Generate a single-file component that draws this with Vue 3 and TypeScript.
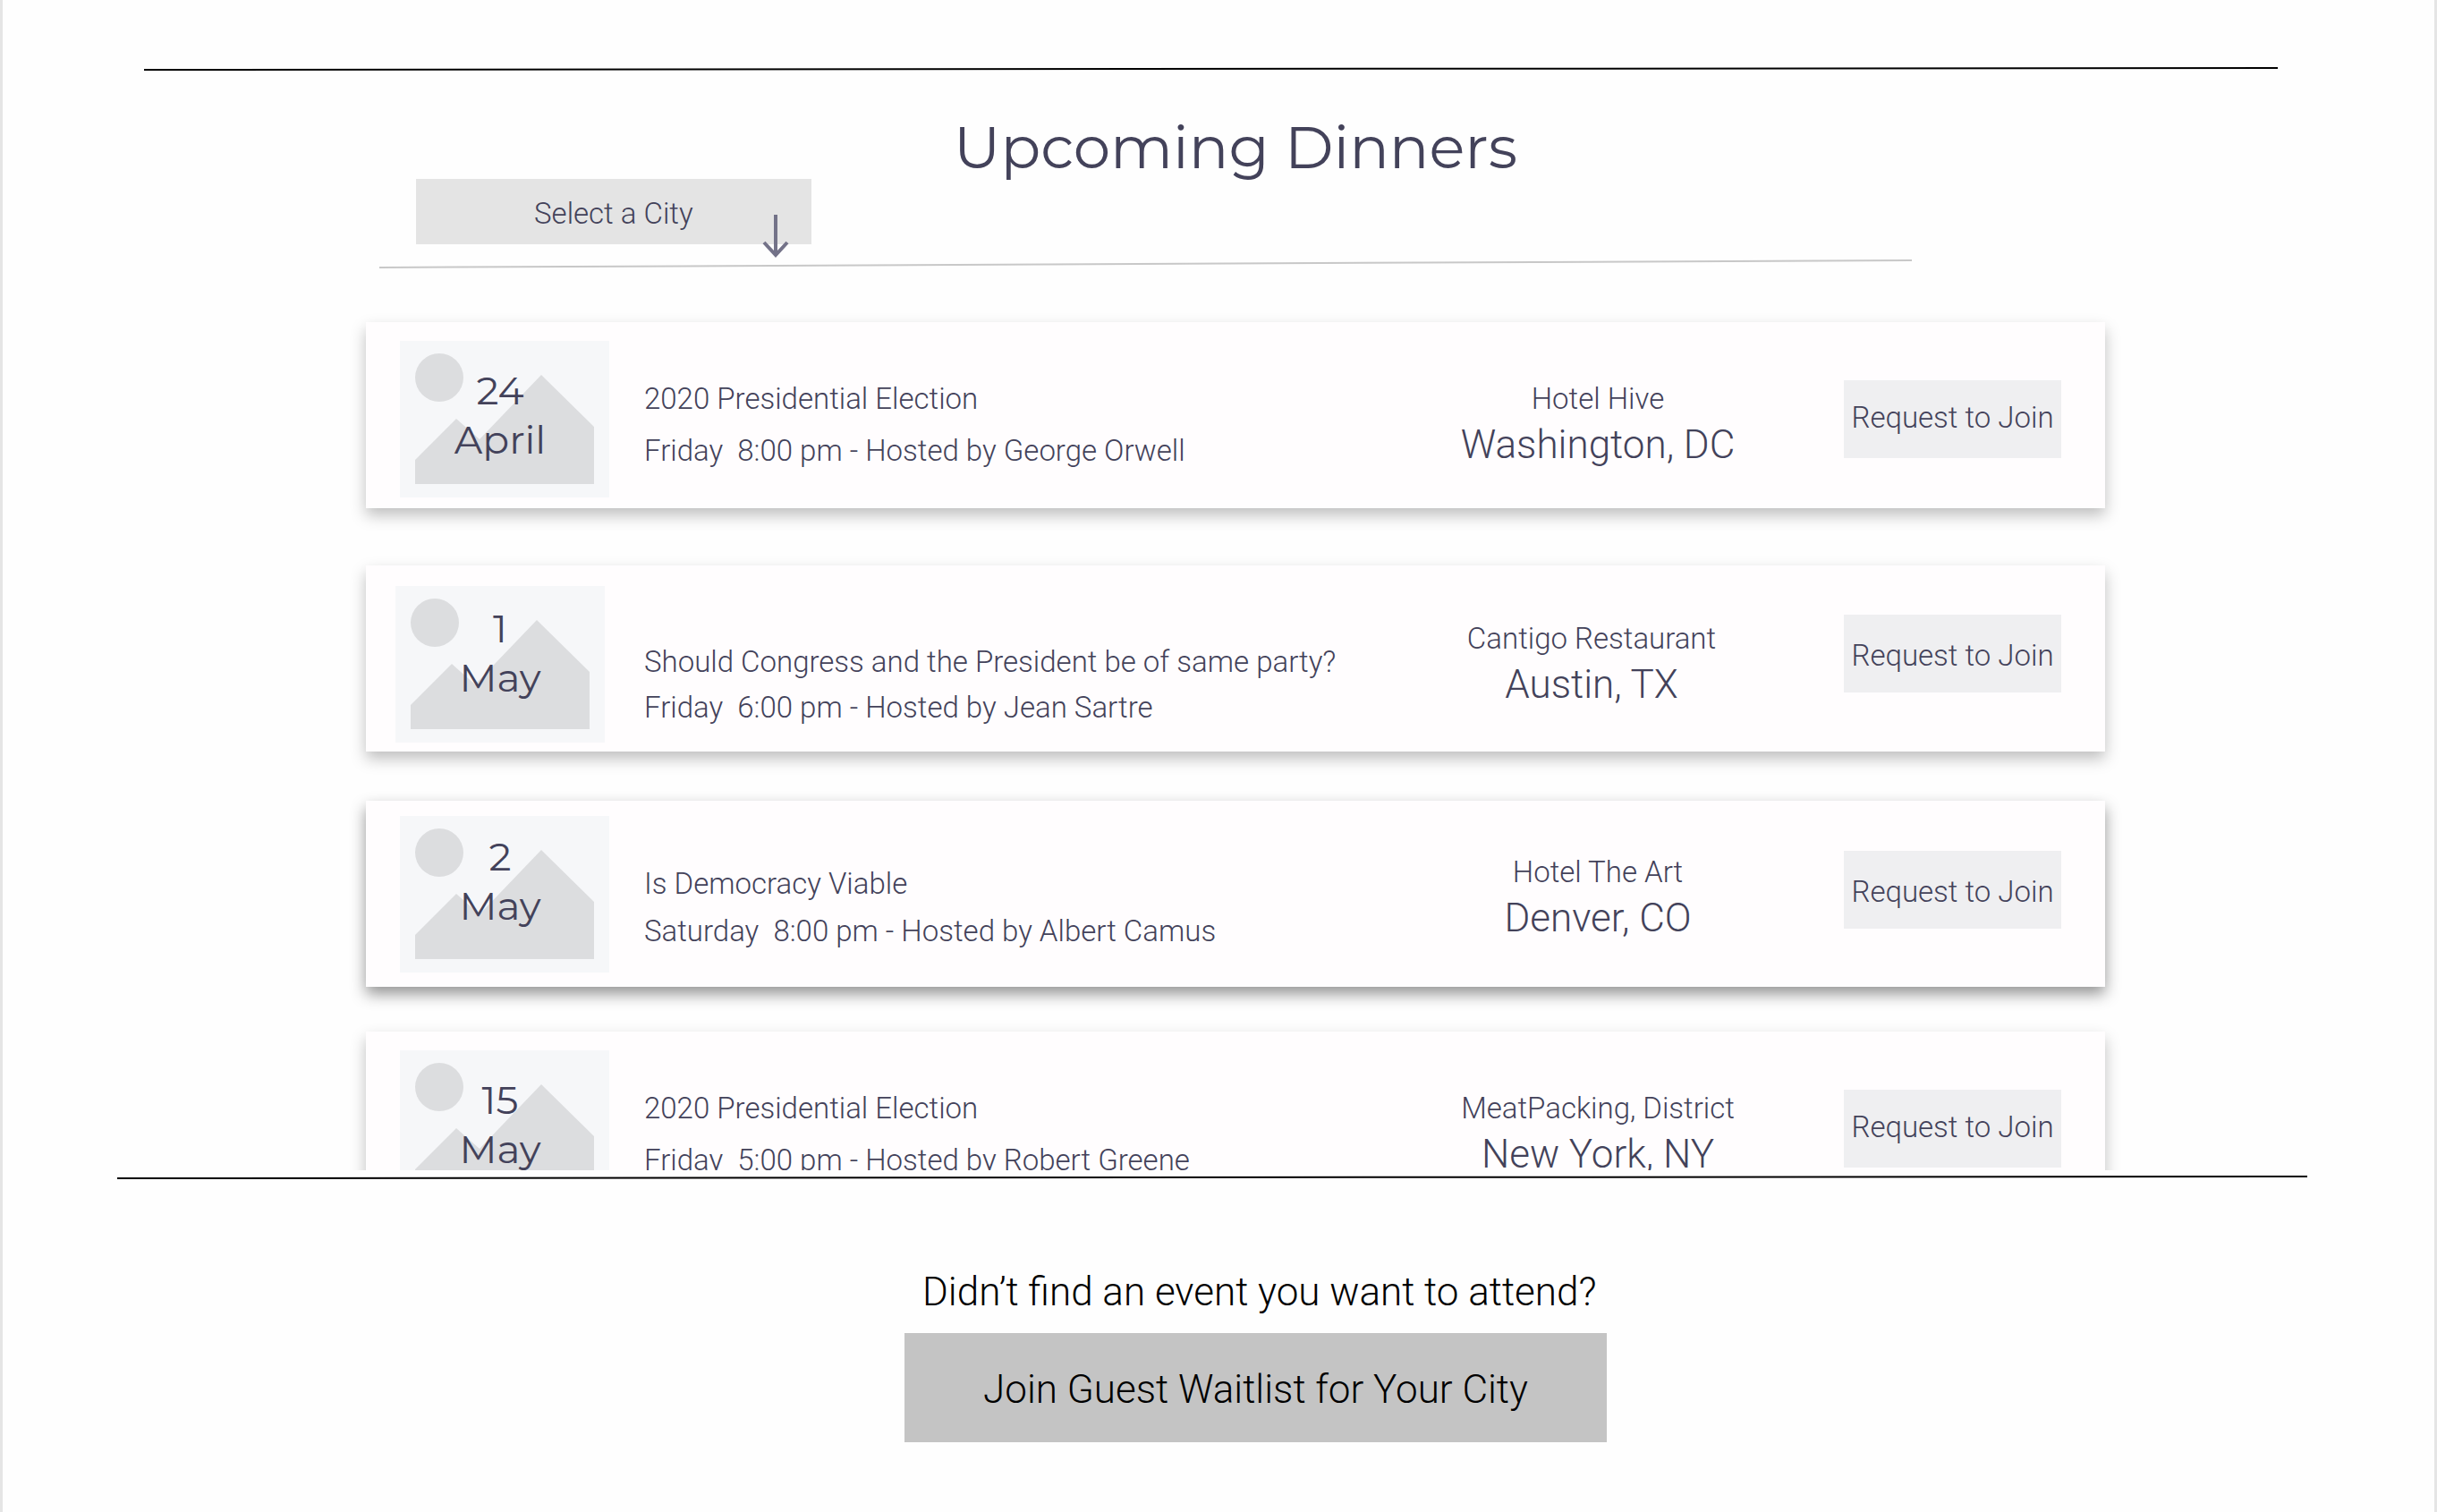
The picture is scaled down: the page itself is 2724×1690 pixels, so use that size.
<script setup lang="ts">
import { ref } from 'vue'

interface Dinner {
  id: number
  day: string
  month: string
  topic: string
  time: string
  venue: string
  city: string
  layout: string
}

const cities = ['Washington, DC', 'Austin, TX', 'Denver, CO', 'New York, NY']
const selectedCity = ref('')

const dinners: Dinner[] = [
  {
    id: 1,
    day: '24',
    month: 'April',
    topic: '2020 Presidential Election',
    time: 'Friday  8:00 pm - Hosted by George Orwell',
    venue: 'Hotel Hive',
    city: 'Washington, DC',
    layout: 'regular',
  },
  {
    id: 2,
    day: '1',
    month: 'May',
    topic: 'Should Congress and the President be of same party?',
    time: 'Friday  6:00 pm - Hosted by Jean Sartre',
    venue: 'Cantigo Restaurant',
    city: 'Austin, TX',
    layout: 'low',
  },
  {
    id: 3,
    day: '2',
    month: 'May',
    topic: 'Is Democracy Viable',
    time: 'Saturday  8:00 pm - Hosted by Albert Camus',
    venue: 'Hotel The Art',
    city: 'Denver, CO',
    layout: 'raised',
  },
  {
    id: 4,
    day: '15',
    month: 'May',
    topic: '2020 Presidential Election',
    time: 'Friday  5:00 pm - Hosted by Robert Greene',
    venue: 'MeatPacking, District',
    city: 'New York, NY',
    layout: 'regular',
  },
]
</script>

<template>
  <main class="page">
    <svg class="rule rule-top" viewBox="0 0 2385 6" preserveAspectRatio="none" aria-hidden="true">
      <line x1="0" y1="4" x2="2385" y2="2" stroke="#000" stroke-width="2" />
    </svg>

    <header class="head">
      <div class="head-inner">
        <h1>Upcoming Dinners</h1>
        <div class="picker">
          <select v-model="selectedCity" aria-label="Select a City">
            <option value="">Select a City</option>
            <option v-for="city in cities" :key="city" :value="city">{{ city }}</option>
          </select>
          <svg class="arrow" viewBox="0 0 30 50" aria-hidden="true">
            <path d="M15 1V46M2 32L15 46L28 32" fill="none" stroke="#737288" stroke-width="4" />
          </svg>
        </div>
        <svg class="divider" viewBox="0 0 1713 12" preserveAspectRatio="none" aria-hidden="true">
          <line x1="0" y1="10" x2="1713" y2="2" stroke="#c8c8c8" stroke-width="2" />
        </svg>
      </div>
    </header>

    <section class="events" aria-label="Upcoming dinners">
      <ul class="list">
        <li v-for="d in dinners" :key="d.id" class="card" :class="d.layout">
          <div class="thumb">
            <svg viewBox="0 0 234 175" aria-hidden="true">
              <rect width="234" height="175" fill="#f6f7f9" />
              <circle cx="44" cy="41" r="27" fill="#dcdddf" />
              <path d="M17 133L63 87L89 110L158 38L217 96V160H17Z" fill="#dcdddf" />
            </svg>
            <div class="date">
              <span>{{ d.day }}</span>
              <span>{{ d.month }}</span>
            </div>
          </div>
          <div class="details">
            <h2>{{ d.topic }}</h2>
            <p>{{ d.time }}</p>
          </div>
          <div class="place">
            <p class="venue">{{ d.venue }}</p>
            <p class="city">{{ d.city }}</p>
          </div>
          <button class="join" type="button">Request to Join</button>
        </li>
      </ul>
    </section>

    <svg class="rule rule-bottom" viewBox="0 0 2448 6" preserveAspectRatio="none" aria-hidden="true">
      <line x1="0" y1="4" x2="2448" y2="2" stroke="#000" stroke-width="2" />
    </svg>

    <footer class="waitlist">
      <div class="waitlist-inner">
        <p>Didn’t find an event you want to attend?</p>
        <button type="button">Join Guest Waitlist for Your City</button>
      </div>
    </footer>
  </main>
</template>

<style>
body {
  margin: 0;
  background: #fefefe;
}
</style>

<style scoped>
.page {
  box-sizing: border-box;
  min-height: 100vh;
  padding-top: 74px;
  border: solid #e5e5e5;
  border-width: 0 3px;
  font-family: Roboto, "Liberation Sans", sans-serif;
  font-weight: 300;
  font-size: 33px;
  line-height: 42px;
  color: #43425a;
}

h1,
h2,
p,
ul {
  margin: 0;
  padding: 0;
  font: inherit;
}

button,
select {
  border: 0;
  border-radius: 0;
  font: inherit;
  color: inherit;
  cursor: pointer;
}

.rule {
  display: block;
  height: 6px;
}

.rule-top {
  width: calc(100% - 333px);
  margin-left: 158px;
}

.rule-bottom {
  width: calc(100% - 270px);
  margin-top: 5px;
  margin-left: 128px;
}

.head,
.events {
  display: grid;
  grid-template-columns: 406fr 1944fr 368fr;
}

.head-inner,
.list {
  grid-column: 2;
  min-width: 0;
}

.head h1 {
  margin-top: 50px;
  font-family: Montserrat, Inter, sans-serif;
  font-weight: 400;
  font-size: 66px;
  line-height: 70px;
  text-align: center;
}

.picker {
  position: relative;
  width: 442px;
  height: 73px;
  margin-left: 56px;
}

.picker select {
  width: 100%;
  height: 100%;
  padding: 4px 0 0 132px;
  appearance: none;
  background: #e4e4e4;
}

.arrow {
  position: absolute;
  top: 39px;
  right: 25px;
  width: 30px;
  height: 50px;
  pointer-events: none;
}

.divider {
  display: block;
  width: calc(100% - 231px);
  height: 12px;
  margin-top: 16px;
  margin-left: 15px;
}

.events {
  height: 1007px;
  overflow-y: auto;
  scrollbar-width: none;
}

.list {
  padding: 59px 0 50px;
  list-style: none;
}

.card {
  --thumb-left: 38px;
  --thumb-top: 21px;
  --date-top: 28px;
  --date-right: 10px;
  --details-top: 65px;
  --details-gap: 16px;
  --place-top: 65px;
  --place-right: 95px;
  --join-top: 65px;
  display: grid;
  grid-template-columns: 272px 1fr 360px 243px;
  align-items: start;
  box-sizing: border-box;
  height: 208px;
  margin-bottom: 64px;
  padding-right: 49px;
  background: #fffdfe;
  box-shadow: 0 8px 16px rgba(0, 0, 0, 0.25);
}

.card.low {
  --thumb-left: 33px;
  --thumb-top: 23px;
  --date-top: 20px;
  --date-right: 0px;
  --details-top: 87px;
  --details-gap: 9px;
  --place-top: 61px;
  --place-right: 102px;
  --join-top: 55px;
  margin-bottom: 55px;
}

.card.raised {
  --thumb-top: 17px;
  --date-top: 18px;
  --details-top: 72px;
  --details-gap: 11px;
  --place-top: 59px;
  --join-top: 56px;
  margin-bottom: 50px;
  box-shadow: 0 8px 16px rgba(0, 0, 0, 0.42);
}

.thumb {
  display: grid;
  width: 234px;
  margin-top: var(--thumb-top);
  margin-left: var(--thumb-left);
}

.thumb svg {
  grid-area: 1 / 1;
  width: 234px;
  height: 175px;
}

.date {
  grid-area: 1 / 1;
  display: flex;
  flex-direction: column;
  align-items: center;
  margin-top: var(--date-top);
  padding-right: var(--date-right);
  font-family: Montserrat, Inter, sans-serif;
  font-weight: 400;
  font-size: 44px;
  line-height: 55px;
}

.details {
  display: grid;
  row-gap: var(--details-gap);
  margin-top: var(--details-top);
  padding-left: 39px;
  white-space: pre;
}

.place {
  width: 360px;
  margin-top: var(--place-top);
  margin-left: calc(-1 * var(--place-right));
  text-align: center;
}

.city {
  font-size: 44px;
  line-height: 60px;
}

.join {
  height: 87px;
  margin-top: var(--join-top);
  padding: 0;
  background: #efeff1;
  white-space: nowrap;
}

.low .join,
.raised .join {
  padding-top: 4px;
}

.regular .join {
  padding-bottom: 4px;
}

.waitlist {
  display: grid;
  grid-template-columns: 1008fr 785fr 925fr;
  padding-top: 98px;
  font-size: 44px;
  line-height: 54px;
  color: #000;
}

.waitlist-inner {
  grid-column: 2;
  white-space: nowrap;
}

.waitlist p {
  padding-left: 20px;
}

.waitlist button {
  width: 100%;
  height: 122px;
  margin-top: 19px;
  padding-top: 4px;
  background: #c4c4c4;
}
</style>
